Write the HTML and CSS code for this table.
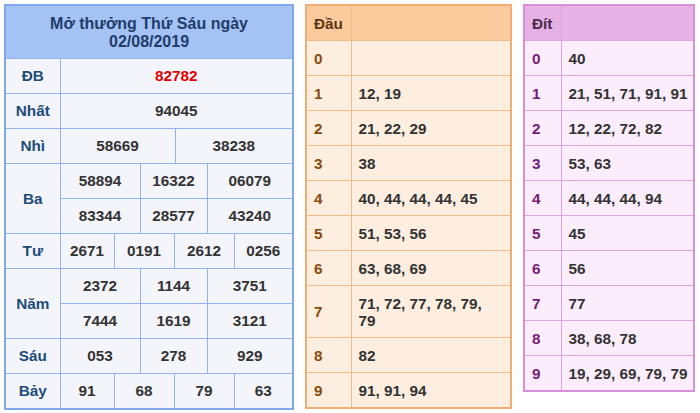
FILE: index.html
```html
<!DOCTYPE html>
<html lang="vi">
<head>
<meta charset="utf-8">
<title>Kết quả xổ số</title>
<link rel="stylesheet" href="styles.css">
</head>
<body>
<div class="page">
  <table class="kq">
    <colgroup>
      <col class="c0"><col class="c1"><col class="c2"><col class="c3"><col class="c4"><col class="c5"><col class="c6"><col class="c7">
    </colgroup>
    <tr class="head"><th colspan="8">Mở thưởng Thứ Sáu ngày<br>02/08/2019</th></tr>
    <tr><td class="lbl">ĐB</td><td colspan="7" class="db">82782</td></tr>
    <tr><td class="lbl">Nhất</td><td colspan="7">94045</td></tr>
    <tr><td class="lbl">Nhì</td><td colspan="4">58669</td><td colspan="3">38238</td></tr>
    <tr><td class="lbl" rowspan="2">Ba</td><td colspan="2">58894</td><td colspan="3">16322</td><td colspan="2">06079</td></tr>
    <tr><td colspan="2">83344</td><td colspan="3">28577</td><td colspan="2">43240</td></tr>
    <tr><td class="lbl">Tư</td><td>2671</td><td colspan="2">0191</td><td colspan="3">2612</td><td>0256</td></tr>
    <tr><td class="lbl" rowspan="2">Năm</td><td colspan="2">2372</td><td colspan="3">1144</td><td colspan="2">3751</td></tr>
    <tr><td colspan="2">7444</td><td colspan="3">1619</td><td colspan="2">3121</td></tr>
    <tr><td class="lbl">Sáu</td><td colspan="2">053</td><td colspan="3">278</td><td colspan="2">929</td></tr>
    <tr><td class="lbl">Bảy</td><td>91</td><td colspan="2">68</td><td colspan="3">79</td><td>63</td></tr>
  </table>

  <table class="lt dau">
    <colgroup><col class="k"><col></colgroup>
    <tr class="head"><th>Đầu</th><th></th></tr>
    <tr><td class="key">0</td><td></td></tr>
    <tr><td class="key">1</td><td>12, 19</td></tr>
    <tr><td class="key">2</td><td>21, 22, 29</td></tr>
    <tr><td class="key">3</td><td>38</td></tr>
    <tr><td class="key">4</td><td>40, 44, 44, 44, 45</td></tr>
    <tr><td class="key">5</td><td>51, 53, 56</td></tr>
    <tr><td class="key">6</td><td>63, 68, 69</td></tr>
    <tr class="tall"><td class="key">7</td><td>71, 72, 77, 78, 79, 79</td></tr>
    <tr><td class="key">8</td><td>82</td></tr>
    <tr><td class="key">9</td><td>91, 91, 94</td></tr>
  </table>

  <table class="lt dit">
    <colgroup><col class="k"><col></colgroup>
    <tr class="head"><th>Đít</th><th></th></tr>
    <tr><td class="key">0</td><td>40</td></tr>
    <tr><td class="key">1</td><td>21, 51, 71, 91, 91</td></tr>
    <tr><td class="key">2</td><td>12, 22, 72, 82</td></tr>
    <tr><td class="key">3</td><td>53, 63</td></tr>
    <tr><td class="key">4</td><td>44, 44, 44, 94</td></tr>
    <tr><td class="key">5</td><td>45</td></tr>
    <tr><td class="key">6</td><td>56</td></tr>
    <tr><td class="key">7</td><td>77</td></tr>
    <tr><td class="key">8</td><td>38, 68, 78</td></tr>
    <tr><td class="key">9</td><td>19, 29, 69, 79, 79</td></tr>
  </table>
</div>
</body>
</html>
```

FILE: styles.css
```css
html, body {
  margin: 0;
  padding: 0;
  background: #ffffff;
}

.page {
  display: flex;
  align-items: flex-start;
  gap: 11px;
  padding: 4px;
  font-family: "Liberation Sans", Arial, sans-serif;
  font-weight: bold;
  font-size: 15.3px;
  color: #333333;
}

table {
  border-collapse: collapse;
  table-layout: fixed;
}

/* ---------- left: results ---------- */
.kq {
  width: 290px;
  border: 2px solid #80a8ec;
  background: #f3f5fb;
}
.kq .c0 { width: 55px; }
.kq .c1 { width: 54px; }
.kq .c2 { width: 26px; }
.kq .c3 { width: 34px; }
.kq .c4 { width: 1px; }
.kq .c5 { width: 32px; }
.kq .c6 { width: 27px; }
.kq .c7 { width: 59px; }

.kq td {
  border: 1px solid #92b5ef;
  height: 34px;
  padding: 0;
  text-align: center;
  vertical-align: middle;
  line-height: 18px;
}
.kq .head th {
  background: #a4c2f4;
  border: 1px solid #92b5ef;
  height: 50px;
  padding: 2px 0 0;
  font-size: 16px;
  line-height: 18px;
  color: #1e3d6b;
  text-align: center;
}
.kq .lbl {
  color: #1d4b7a;
}
.kq .db {
  color: #e00000;
}

/* ---------- loto tables ---------- */
.lt td, .lt th {
  height: 34px;
  padding: 0 10px 0 7px;
  text-align: left;
  vertical-align: middle;
  line-height: 17px;
}
.lt .tall td {
  height: 51px;
}

.dau {
  width: 207px;
  border: 2px solid #f1ae72;
  background: #fdeee0;
}
.dau .k { width: 45px; }
.dau td, .dau th { border: 1px solid #f2bc88; }
.dau .head th {
  background: #fbcb9d;
  color: #5b3716;
}
.dau .key { color: #8a4a0c; }

.dit {
  width: 172px;
  border: 2px solid #d88fd8;
  background: #fcedfc;
}
.dit .k { width: 37px; }
.dit td, .dit th {
  border: 1px solid #dca3dc;
  padding-right: 0;
  white-space: nowrap;
}
.dit .head th {
  background: #e6b2e6;
  color: #4b2a4b;
}
.dit .key { color: #761b76; }
```
